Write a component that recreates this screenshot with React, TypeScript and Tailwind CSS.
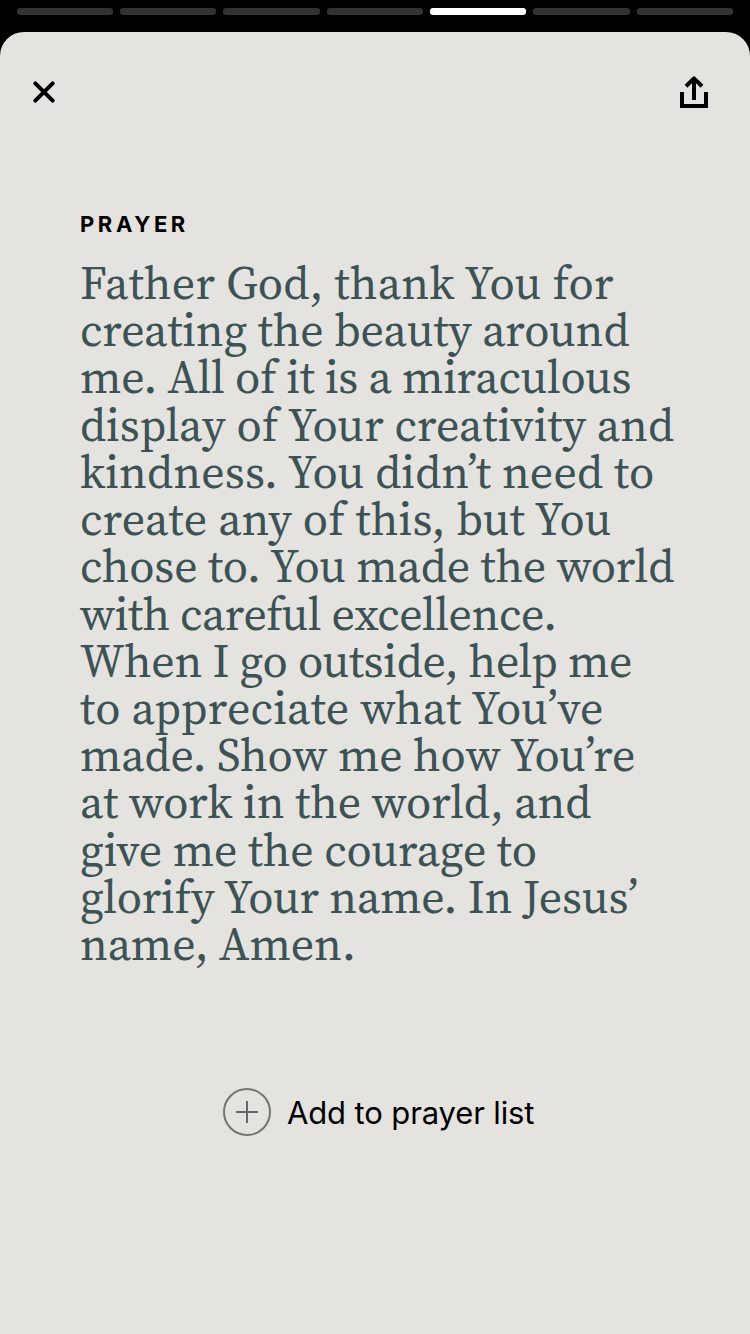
const segments = [false, false, false, false, true, false, false];

const lines = [
  { text: "Father God, thank You for", tracking: "tracking-[0.25px]" },
  { text: "creating the beauty around", tracking: "tracking-[-0.12px]" },
  { text: "me. All of it is a miraculous", tracking: "tracking-[-0.28px]" },
  { text: "display of Your creativity and", tracking: "tracking-[0.04px]" },
  { text: "kindness. You didn’t need to", tracking: "tracking-[0.11px]" },
  { text: "create any of this, but You", tracking: "tracking-[0.17px]" },
  { text: "chose to. You made the world", tracking: "tracking-[-0.17px]" },
  { text: "with careful excellence.", tracking: "tracking-[-0.42px]" },
  { text: "When I go outside, help me", tracking: "tracking-[-0.31px]" },
  { text: "to appreciate what You’ve", tracking: "tracking-[0.19px]" },
  { text: "made. Show me how You’re", tracking: "tracking-[-0.17px]" },
  { text: "at work in the world, and", tracking: "tracking-[-0.04px]" },
  { text: "give me the courage to", tracking: "tracking-[-0.12px]" },
  { text: "glorify Your name. In Jesus’", tracking: "tracking-[-0.2px]" },
  { text: "name, Amen.", tracking: "tracking-[-0.1px]" },
];

function CloseIcon() {
  return (
    <svg width="24" height="24" viewBox="0 0 24 24" fill="none" stroke="black" strokeWidth="4" strokeLinecap="round">
      <path d="M3.3 3.3 20.7 20.7M20.7 3.3 3.3 20.7" />
    </svg>
  );
}

function ShareIcon() {
  return (
    <svg width="28" height="32" viewBox="0 0 28 32" fill="none" stroke="black" strokeWidth="4">
      <path d="M2 16V30H26V16" />
      <path d="M14 24V3M6 10.2 14 2.4 22 10.2" strokeLinejoin="round" />
    </svg>
  );
}

function AddIcon() {
  return (
    <svg width="48" height="48" viewBox="0 0 48 48" fill="none" stroke="#737370" strokeWidth="2">
      <circle cx="24" cy="24" r="23" />
      <path d="M24 13V35M13 24H35" stroke="#666664" />
    </svg>
  );
}

export default function App() {
  return (
    <main className="flex h-[1334px] w-[750px] flex-col overflow-hidden bg-black font-['Inter','Liberation_Sans',sans-serif]">
      <div className="flex h-8 shrink-0 gap-[7px] pt-2 pr-[17px] pl-[16.5px]">
        {segments.map((active, i) => (
          <div key={i} className={`h-[7px] flex-1 rounded-[3px] ${active ? "bg-white" : "bg-[#333333]"}`} />
        ))}
      </div>
      <section className="flex flex-1 flex-col rounded-t-[24px] bg-[#e4e3df]">
        <header className="flex items-center justify-between pt-11 pr-[42px] pl-8">
          <button aria-label="Close"><CloseIcon /></button>
          <button aria-label="Share"><ShareIcon /></button>
        </header>
        <article className="h-[860px] px-20 pt-[100px]">
          <h1 className="text-[22px] leading-8 font-bold tracking-[3.6px]">PRAYER</h1>
          <p className="mt-[19px] font-['Source_Serif_4','Liberation_Serif',serif] text-[46px] leading-[47.22px] text-[#3d5255]">
            {lines.map(({ text, tracking }) => (
              <span key={text} className={`block whitespace-nowrap ${tracking}`}>{text}</span>
            ))}
          </p>
        </article>
        <button className="mt-[120px] ml-[223px] flex items-center gap-4 self-start">
          <AddIcon />
          <span className="pt-0.5 text-[31px] leading-10 tracking-[-0.13px] whitespace-nowrap">Add to prayer list</span>
        </button>
      </section>
    </main>
  );
}
